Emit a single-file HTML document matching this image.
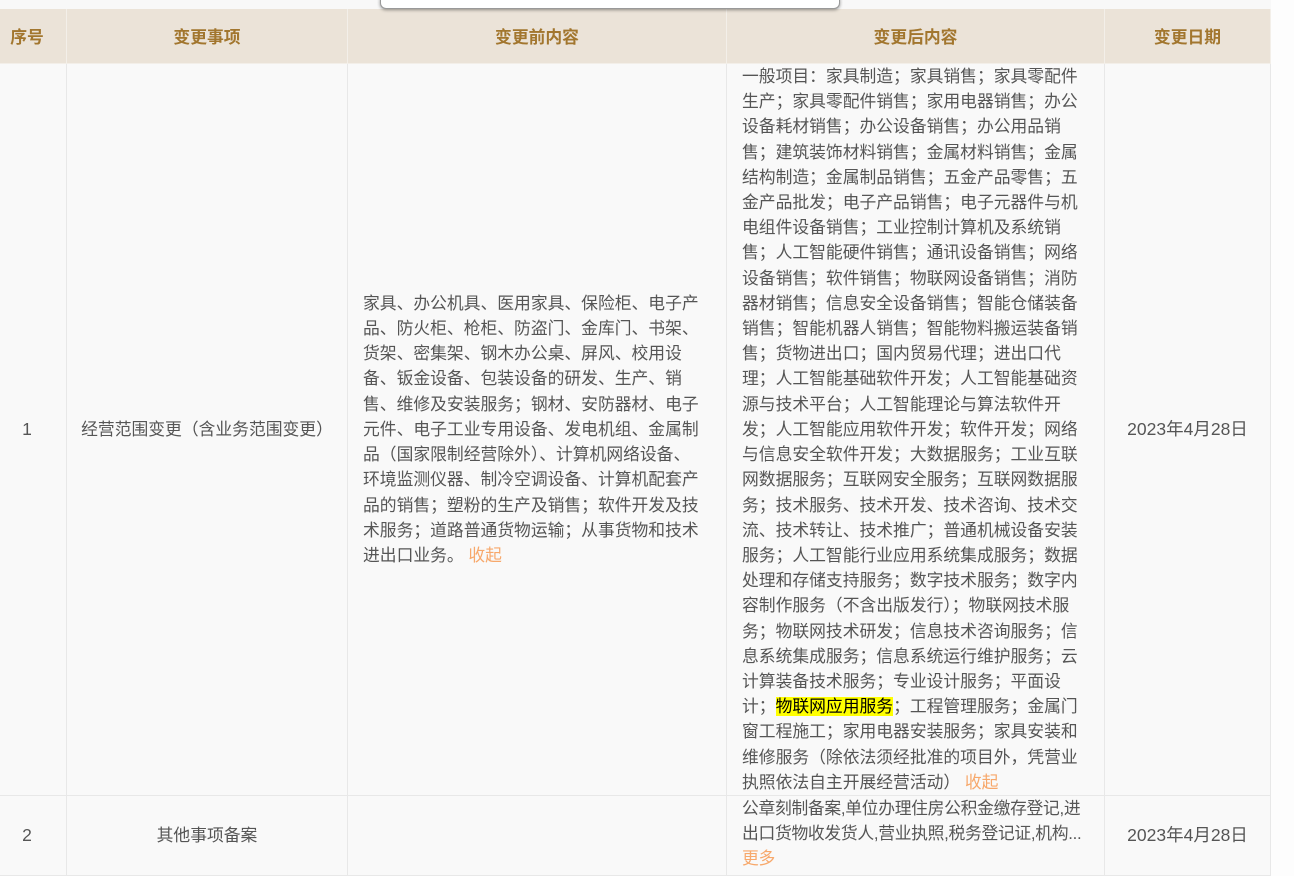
<!DOCTYPE html>
<html><head><meta charset="utf-8"><style>
*{margin:0;padding:0;box-sizing:border-box}
body{width:1294px;height:859px;overflow:hidden;background:#fdfdfd;font-family:"Liberation Sans","Noto Sans CJK SC",sans-serif;position:relative}
.top{position:absolute;left:0;top:0;width:1271px;height:9px;background:#f8f8f8}
.pop{position:absolute;left:380px;top:-6px;width:460px;height:15px;background:#fff;border:1px solid #999;border-radius:6px;box-shadow:0 1px 3px rgba(0,0,0,.4)}
.c{position:absolute;border-right:1px solid #e8e8e8;border-bottom:1px solid #e8e8e8}
.h{top:9px;height:55px;background:#ebe3d8;color:#a2762e;font-weight:bold;font-size:16.8px;display:flex;align-items:center;justify-content:center;border-color:#f3efe9}
.b{background:#f9f9f9;color:#555;font-size:16.8px;letter-spacing:0;line-height:25.2px;display:flex;align-items:center;justify-content:center;white-space:nowrap}
.l{justify-content:flex-start;padding-left:15px}
.d{font-size:17.5px}
.o{color:#f7a86b}
.y{background:#ff0;color:#000}
</style></head><body>
<div class="top"></div>
<div class="c h" style="left:0;width:67px;padding-right:12px">序号</div>
<div class="c h" style="left:67px;width:281px">变更事项</div>
<div class="c h" style="left:348px;width:379px">变更前内容</div>
<div class="c h" style="left:727px;width:378px">变更后内容</div>
<div class="c h" style="left:1105px;width:166px">变更日期</div>

<div class="c b d" style="left:0;top:64px;width:67px;height:732px;padding-right:12px">1</div>
<div class="c b" style="left:67px;top:64px;width:281px;height:732px">经营范围变更（含业务范围变更）</div>
<div class="c b l" style="left:348px;top:64px;width:379px;height:732px"><div>家具、办公机具、医用家具、保险柜、电子产<br>品、防火柜、枪柜、防盗门、金库门、书架、<br>货架、密集架、钢木办公桌、屏风、校用设<br>备、钣金设备、包装设备的研发、生产、销<br>售、维修及安装服务；钢材、安防器材、电子<br>元件、电子工业专用设备、发电机组、金属制<br>品（国家限制经营除外）、计算机网络设备、<br>环境监测仪器、制冷空调设备、计算机配套产<br>品的销售；塑粉的生产及销售；软件开发及技<br>术服务；道路普通货物运输；从事货物和技术<br>进出口业务。 <span class="o">收起</span></div></div>
<div class="c b l" style="left:727px;top:64px;width:378px;height:732px"><div>一般项目：家具制造；家具销售；家具零配件<br>生产；家具零配件销售；家用电器销售；办公<br>设备耗材销售；办公设备销售；办公用品销<br>售；建筑装饰材料销售；金属材料销售；金属<br>结构制造；金属制品销售；五金产品零售；五<br>金产品批发；电子产品销售；电子元器件与机<br>电组件设备销售；工业控制计算机及系统销<br>售；人工智能硬件销售；通讯设备销售；网络<br>设备销售；软件销售；物联网设备销售；消防<br>器材销售；信息安全设备销售；智能仓储装备<br>销售；智能机器人销售；智能物料搬运装备销<br>售；货物进出口；国内贸易代理；进出口代<br>理；人工智能基础软件开发；人工智能基础资<br>源与技术平台；人工智能理论与算法软件开<br>发；人工智能应用软件开发；软件开发；网络<br>与信息安全软件开发；大数据服务；工业互联<br>网数据服务；互联网安全服务；互联网数据服<br>务；技术服务、技术开发、技术咨询、技术交<br>流、技术转让、技术推广；普通机械设备安装<br>服务；人工智能行业应用系统集成服务；数据<br>处理和存储支持服务；数字技术服务；数字内<br>容制作服务（不含出版发行）；物联网技术服<br>务；物联网技术研发；信息技术咨询服务；信<br>息系统集成服务；信息系统运行维护服务；云<br>计算装备技术服务；专业设计服务；平面设<br>计；<span class="y">物联网应用服务</span>；工程管理服务；金属门<br>窗工程施工；家用电器安装服务；家具安装和<br>维修服务（除依法须经批准的项目外，凭营业<br>执照依法自主开展经营活动） <span class="o">收起</span></div></div>
<div class="c b d" style="left:1105px;top:64px;width:166px;height:732px">2023年4月28日</div>

<div class="c b d" style="left:0;top:796px;width:67px;height:80px;padding-right:12px">2</div>
<div class="c b" style="left:67px;top:796px;width:281px;height:80px">其他事项备案</div>
<div class="c b" style="left:348px;top:796px;width:379px;height:80px"></div>
<div class="c b l" style="left:727px;top:796px;width:378px;height:80px;align-items:flex-start;letter-spacing:-.3px"><div>公章刻制备案,单位办理住房公积金缴存登记,进<br>出口货物收发货人,营业执照,税务登记证,机构...<br><span class="o">更多</span></div></div>
<div class="c b d" style="left:1105px;top:796px;width:166px;height:80px">2023年4月28日</div>
<div class="pop"></div>
</body></html>
